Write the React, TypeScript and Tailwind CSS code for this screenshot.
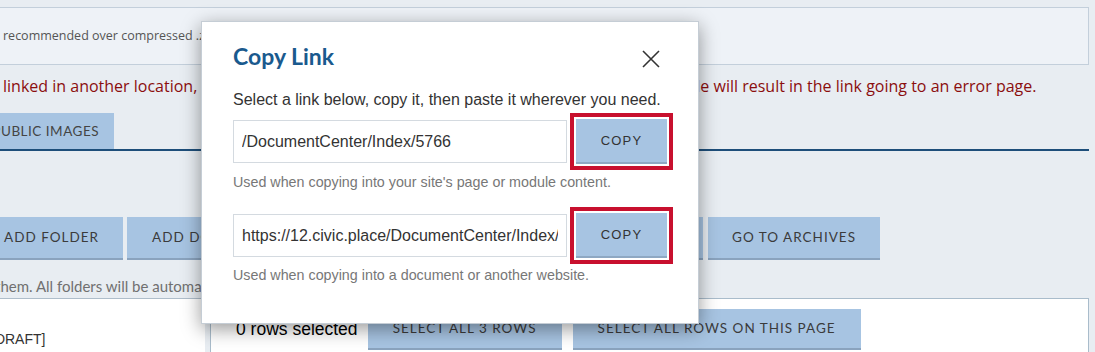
import React from "react";

const bgBtn =
  "h-[43px] shrink-0 bg-[#a7c4e2] border-b-2 border-[#8aa3be] flex items-center justify-center text-[13.5px] tracking-[1px] text-[#3b3b3b] whitespace-nowrap overflow-hidden";

function CopyRow({ value }: { value: string }) {
  return (
    <div className="flex items-center h-[45px]">
      <input
        readOnly
        value={value}
        className="w-[334px] h-[43px] border border-[#d4dae0] bg-white pl-[8px] pr-[8px] text-[16px] text-[#333] outline-none font-['Liberation_Sans',Arial,sans-serif]"
      />
      <button className="ml-[9px] w-[91px] h-[45px] bg-[#a7c4e2] border-b-2 border-[#8ea8c3] text-[13px] tracking-[1.2px] text-[#333] outline-4 outline-[#c8102e] outline-offset-2 font-['Liberation_Sans',Arial,sans-serif]">
        COPY
      </button>
    </div>
  );
}

export default function App() {
  return (
    <div className="relative w-[1095px] h-[352px] overflow-hidden bg-[#e8edf2] font-['Lato',sans-serif]">
      <div className="-ml-[20px] w-[1109px]">
        {/* top info panel */}
        <div className="mt-[7px] h-[58px] border border-[#c3cfdb] bg-[#eef2f7] flex items-center pl-[22px] text-[12.5px] text-[#555] font-['Open_Sans',sans-serif]">
          recommended over compressed .zip files.
        </div>

        {/* red warning */}
        <div className="mt-[11px] h-[20px] leading-[20px] pl-[23px] text-[16px] text-[#8b0e0e] whitespace-nowrap font-['Open_Sans',sans-serif]">
          linked in another location, unpublishing, archiving, deleting or moving this document or the file will result in the link going to an error page.
        </div>

        {/* tabs */}
        <div className="mt-[17px] flex border-b-2 border-[#1d4e7a]">
          <div className="w-[134px] h-[36px] bg-[#a7c4e2] flex items-center justify-end pr-[15px] text-[13.5px] tracking-[0.5px] text-[#444] whitespace-nowrap">
            PUBLIC IMAGES
          </div>
        </div>

        {/* action buttons */}
        <div className="mt-[66px] flex">
          <div className={`${bgBtn} w-[143px]`}>ADD FOLDER</div>
          <div className={`${bgBtn} w-[170px] ml-[4px] justify-start pl-[25px]`}>ADD DOCUMENT</div>
          <div className={`${bgBtn} w-[199px] ml-[4px]`}>ADD LINK</div>
          <div className={`${bgBtn} w-[199px] ml-[4px]`}>MANAGE FOLDERS</div>
          <div className={`${bgBtn} w-[172px] ml-[5px]`}>GO TO ARCHIVES</div>
        </div>

        {/* note */}
        <div className="mt-[16px] h-[20px] leading-[20px] pl-[15px] text-[15px] text-[#707070] whitespace-nowrap">
          them. All folders will be automatically published once documents are added.
        </div>

        {/* lower panels */}
        <div className="mt-[2px] flex h-[80px]">
          <div className="w-[225px] bg-white border-t border-[#aebdca] pt-[30px] pl-[11px] text-[14px] leading-[20px] text-[#333] font-['Liberation_Sans',Arial,sans-serif] whitespace-nowrap">
            [DRAFT]
          </div>
          <div className="ml-[5px] flex-1 bg-white border border-[#a9bccb] pt-[10px] pl-[25px] flex items-start">
            <div className="h-[41px] flex items-center text-[17.5px] text-black font-['Liberation_Sans',Arial,sans-serif] whitespace-nowrap">
              0 rows selected
            </div>
            <div className={`${bgBtn} w-[194px] ml-[10px] !h-[41px]`}>SELECT ALL 3 ROWS</div>
            <div className={`${bgBtn} w-[288px] ml-[11px] !h-[41px]`}>SELECT ALL ROWS ON THIS PAGE</div>
          </div>
        </div>
      </div>

      {/* modal */}
      <div className="absolute left-[201px] top-[21px] w-[498px] bg-white border border-[#c5cdd5] shadow-[0_5px_18px_rgba(0,0,0,0.4)] pt-[20px] pl-[31px] pr-[31px] pb-[39px] font-['Liberation_Sans',Arial,sans-serif]">
        <div className="flex items-start justify-between h-[28px]">
          <h2 className="text-[23px] leading-[28px] font-bold text-[#1a5a8e] font-['Lato',sans-serif]">Copy Link</h2>
          <svg width="18" height="18" viewBox="0 0 18 18" className="mt-[8px] mr-[7px]">
            <path d="M1 1 L17 17 M17 1 L1 17" stroke="#333" strokeWidth="1.6" fill="none" />
          </svg>
        </div>
        <p className="mt-[20px] text-[16px] leading-[20px] text-[#333] whitespace-nowrap">
          Select a link below, copy it, then paste it wherever you need.
        </p>
        <div className="mt-[9px]">
          <CopyRow value="/DocumentCenter/Index/5766" />
        </div>
        <p className="mt-[9px] text-[14.3px] leading-[18px] text-[#777]">
          Used when copying into your site's page or module content.
        </p>
        <div className="mt-[22px]">
          <CopyRow value="https://12.civic.place/DocumentCenter/Index/5766" />
        </div>
        <p className="mt-[8px] text-[14.3px] leading-[18px] text-[#777]">
          Used when copying into a document or another website.
        </p>
      </div>
    </div>
  );
}
